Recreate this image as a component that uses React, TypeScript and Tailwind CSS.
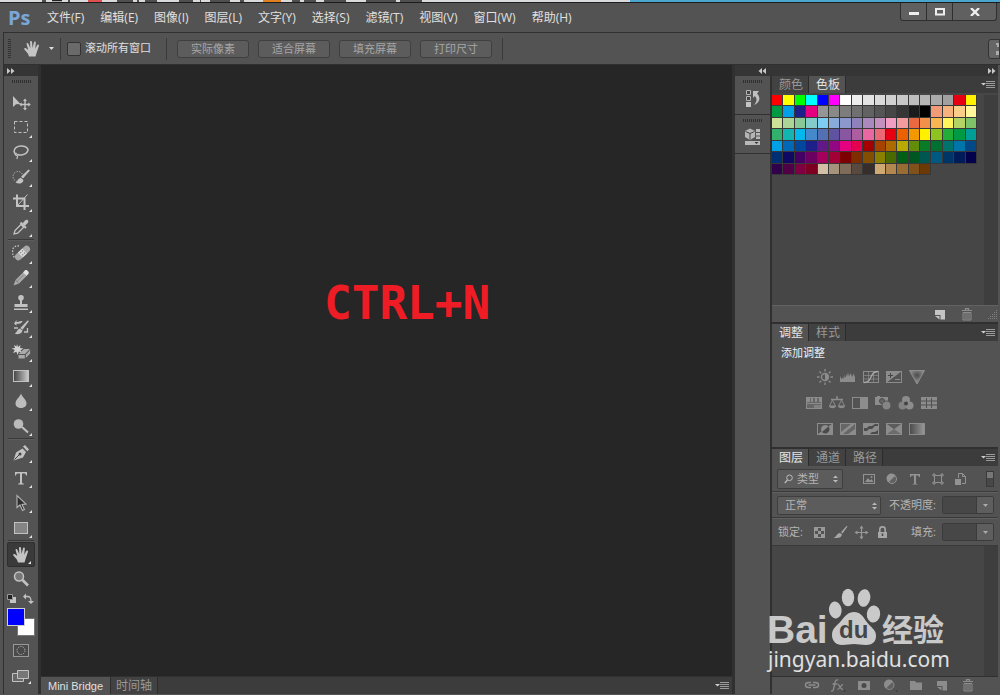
import type { ReactNode } from 'react';

const MENUS: [string, string][] = [
  ['文件', 'F'],
  ['编辑', 'E'],
  ['图像', 'I'],
  ['图层', 'L'],
  ['文字', 'Y'],
  ['选择', 'S'],
  ['滤镜', 'T'],
  ['视图', 'V'],
  ['窗口', 'W'],
  ['帮助', 'H'],
];

const VIEW_BUTTONS = ['实际像素', '适合屏幕', '填充屏幕', '打印尺寸'];

const SWATCHES = [
  '#ff0000', '#ffff00', '#00ff00', '#00ffff', '#0000ff', '#ff00ff', '#ffffff', '#ededed', '#e3e3e3', '#dadada', '#d0d0d0', '#c8c8c8', '#bebebe', '#b5b5b5', '#aaaaaa', '#a0a0a0', '#e60012', '#fff100',
  '#009944', '#00a0e9', '#1d2088', '#e4007f', '#959595', '#898989', '#7d7d7d', '#707070', '#626262', '#555555', '#464646', '#363636', '#1c1c1c', '#000000', '#f29b76', '#f6b37f', '#facd89', '#fff799',
  '#cce198', '#acd598', '#89c997', '#84ccc9', '#7ecef4', '#88abda', '#8c97cb', '#8f82bc', '#aa89bd', '#c490bf', '#f19ec2', '#f29c9f', '#eb6941', '#f19149', '#f8b551', '#fff45c', '#b3d465', '#80c269',
  '#32b16c', '#13b5b1', '#00b7ee', '#448aca', '#556fb5', '#5f52a0', '#8957a1', '#ae5da1', '#ea68a2', '#eb6877', '#e60012', '#eb6100', '#f39800', '#fff100', '#8fc31f', '#22ac38', '#009944', '#009e96',
  '#00a0e9', '#0068b7', '#00479d', '#1d2088', '#601986', '#920783', '#e4007f', '#e5004f', '#a40000', '#a84200', '#ac6a00', '#b7aa00', '#638c0b', '#097c25', '#007130', '#00736d', '#0075a9', '#004986',
  '#002e73', '#100964', '#440062', '#6a005f', '#a4005b', '#a30037', '#7d0000', '#7f2d00', '#834e00', '#8a8000', '#486a00', '#005e15', '#005621', '#005752', '#005982', '#003567', '#001c58', '#03004c',
  '#31004a', '#500047', '#7e0043', '#7d0022', '#d1c0a5', '#a6937c', '#7e6b5a', '#59493f', '#362e2b', '#cfa972', '#b28850', '#996c34', '#81511c', '#6a3906',
];

function Svg({ w, h, children }: { w: number; h: number; children: ReactNode }) {
  return (
    <svg width={w} height={h} viewBox={`0 0 ${w} ${h}`} fill="none" aria-hidden="true" className="block shrink-0">
      {children}
    </svg>
  );
}

const HAND_PATH =
  'M6 16.5 5 13.8 1.4 9.6c-.9-1.2.5-2.3 1.6-1.3L5.3 10 3.6 4.3c-.3-1.3 1.3-1.7 1.8-.5L7.3 8 7 2.1C7 .7 8.9.7 9 2.1L9.6 8l1.3-5.6c.4-1.3 2.1-.9 1.9.5L12.2 8.7l2-3.6c.7-1.1 2.2-.4 1.7.9l-2.4 7.2-1 3.3z';

const C = '#c2c2c2';

function MoveIcon() {
  return (
    <Svg w={20} h={20}>
      <path d="M2 4v11l3-2.700 4.500-.3z" fill={C} />
      <path d="M14 8v9M9.500 12.500h9" stroke={C} strokeWidth="1.400" />
      <path d="m14 6.500-2 2.500h4zM14 18.500l-2-2.500h4zM8.200 12.500l2.500-2v4zM19.800 12.500l-2.500-2v4z" fill={C} />
    </Svg>
  );
}
function MarqueeIcon() {
  return (
    <Svg w={20} h={20}>
      <rect x="3.500" y="4.500" width="13" height="11" stroke={C} strokeDasharray="3 2" />
    </Svg>
  );
}
function LassoIcon() {
  return (
    <Svg w={20} h={20}>
      <path d="M5.500 12.500C1 10 3.500 4.500 9.500 4s9 3 6.500 6.200c-2 2.500-6.500 3.500-10 2.300" stroke={C} strokeWidth="1.500" />
      <path d="M5.800 11.500c-2-.6-2.300 1.800-.3 1.800 1.600.2.900 2.600.2 3.700" stroke={C} strokeWidth="1.200" />
    </Svg>
  );
}
function QuickSelectIcon() {
  return (
    <Svg w={20} h={20}>
      <circle cx="7" cy="9.500" r="5" stroke={C} strokeDasharray="1.200 1.500" />
      <path d="M19 3.500 12 11.500l-2-1.700L17.500 2.500zM4.500 15.500c2-.3 2-4 5.200-4.800l2.800 2.500c-.6 3.800-5.500 4.100-8 2.300z" fill={C} />
    </Svg>
  );
}
function CropIcon() {
  return (
    <Svg w={20} h={20}>
      <path d="M6 2.500V14h12M2 6.500h11.500V18" stroke={C} strokeWidth="2" />
      <path d="m6.500 13.500 10-11" stroke={C} strokeWidth="1" />
    </Svg>
  );
}
function EyedropperIcon() {
  return (
    <Svg w={20} h={20}>
      <path d="m3 17 1-3.500 6-6 2.700 2.700-6 6z" stroke={C} strokeWidth="1.300" />
      <path d="m9.500 5.500 5.500 5.500" stroke={C} strokeWidth="2" />
      <path d="m11.500 6.500 2.500-3c2-2 4.500.5 2.700 2.500l-2.700 2.700z" fill={C} />
    </Svg>
  );
}
function HealIcon() {
  return (
    <Svg w={20} h={20}>
      <path d="M8 3C3.500 2.500 1.500 5 1.600 9c0 3 1 5 2.800 6.500" stroke={C} strokeDasharray="1.500 1.400" strokeWidth="1.300" />
      <g transform="rotate(-43 11.500 10)">
        <rect x="2.500" y="6.500" width="18" height="7" rx="3.500" fill="#a9a9a9" />
        <rect x="8.500" y="6.500" width="6" height="7" fill="#d6d6d6" />
        <path d="M10 8.500h1M12.500 8.500h1M10 11.500h1M12.500 11.500h1" stroke="#666" />
      </g>
    </Svg>
  );
}
function PencilIcon() {
  return (
    <Svg w={20} h={20}>
      <path d="m2.500 17.500 2-5.500 7.500-7.500 3.500 3.500L8 15.500z" fill="#aaa" />
      <path d="m12 4.500 1.800-1.900c1.800-1.800 5.200 1.700 3.500 3.500L15.500 8z" fill="#e2e2e2" />
      <path d="m4.500 12 3.500 3.500M5.500 14l7-7" stroke="#777" strokeWidth=".8" />
    </Svg>
  );
}
function StampIcon() {
  return (
    <Svg w={20} h={20}>
      <circle cx="10" cy="4.800" r="2.800" fill={C} />
      <path d="M9 6h2v5h5.500v3h-13v-3H9zM3 15.500h14V17H3z" fill={C} />
    </Svg>
  );
}
function HistoryBrushIcon() {
  return (
    <Svg w={20} h={20}>
      <path d="M18 4 11.500 12.700 9.400 11 16.500 3.500zM3.500 16.500c2.500-.3 2.200-4.100 5.500-4.900l2.500 2c-.5 3.600-5 4.300-8 2.900z" fill={C} />
      <path d="M3 6.500 5.500 3v2c3 .3 3.500-1.500 6-.7-1 2.400-3.600 2.700-6 2.400v2z" fill={C} />
      <path d="M3 11h4M13 15h3.500v-4" stroke={C} strokeWidth="1.300" />
    </Svg>
  );
}
function EraserIcon() {
  return (
    <Svg w={20} h={20}>
      <path d="m6 2 1 3 2.500-2L9 6l3.500.5-3 1.700 1.500 2.800-3-1.500L6.500 13l-1-3.300L2 11l1.800-3L.5 6.500 4 6 3 3l2.500 1.500z" fill="#d2d2d2" />
      <path d="m7.500 12 5.500-5h6l-5 5zM7.500 13h6.300v3.500H7.500zM14.800 12.700 19.200 8v3.500l-4.400 4.500z" fill="#a8a8a8" />
    </Svg>
  );
}
function GradientIcon() {
  return (
    <Svg w={20} h={20}>
      <defs>
        <linearGradient id="tool-gradient">
          <stop stopColor="#444" />
          <stop offset="1" stopColor="#ccc" />
        </linearGradient>
      </defs>
      <rect x="2.500" y="4.500" width="15" height="11" fill="url(#tool-gradient)" stroke={C} />
    </Svg>
  );
}
function DropIcon() {
  return (
    <Svg w={20} h={20}>
      <path d="M10 2.500c1 3.500 5.500 6 5.500 10 0 6-11 6-11 0 0-4 4.500-6.500 5.500-10z" fill="#bdbdbd" />
    </Svg>
  );
}
function DodgeIcon() {
  return (
    <Svg w={20} h={20}>
      <circle cx="7.500" cy="8" r="4.800" fill="#bbb" />
      <path d="m11 11 6 5.500" stroke={C} strokeWidth="2" />
    </Svg>
  );
}
function PenIcon() {
  return (
    <Svg w={20} h={20}>
      <path d="M2.500 17.500 5 9.500l6.500-4L15 9l-3 5.500z" fill={C} />
      <path d="m12 3.500 2-1.500 4 4.500-1.700 1.700z" fill={C} />
      <path d="m3.500 16.500 5-5" stroke="#444" />
      <circle cx="9" cy="11" r="1.500" fill="#444" />
    </Svg>
  );
}
function TypeIcon() {
  return (
    <Svg w={20} h={20}>
      <path d="M4 4h12v3.500h-1c-.2-1.500-.7-2-2-2h-2v9c0 .8.500 1 1.800 1v1H7.200v-1c1.300 0 1.800-.2 1.800-1v-9H7c-1.300 0-1.800.5-2 2H4z" fill={C} />
    </Svg>
  );
}
function PathSelectIcon() {
  return (
    <Svg w={20} h={20}>
      <path d="M6 2.500v12l3-2.500 2.500 5.500 2-1-2.500-5 4-.5z" fill="#303030" stroke="#b5b5b5" strokeWidth="1.100" />
    </Svg>
  );
}
function RectIcon() {
  return (
    <Svg w={20} h={20}>
      <rect x="3.500" y="4.500" width="13" height="11" fill="#858585" stroke={C} />
    </Svg>
  );
}
function HandIcon() {
  return (
    <Svg w={18} h={18}>
      <path d={HAND_PATH} fill="#c4c4c4" />
    </Svg>
  );
}
function ZoomIcon() {
  return (
    <Svg w={20} h={20}>
      <circle cx="8" cy="7.500" r="4.500" fill="#777" stroke={C} strokeWidth="1.500" />
      <path d="m11.500 11 5.500 5.500" stroke={C} strokeWidth="2.600" />
    </Svg>
  );
}

type Tool = { name: string; icon: () => ReactNode; plain?: boolean; active?: boolean };

const GROUP_A: Tool[] = [
  { name: '移动', icon: MoveIcon, plain: true },
  { name: '矩形选框', icon: MarqueeIcon },
  { name: '套索', icon: LassoIcon },
  { name: '快速选择', icon: QuickSelectIcon },
  { name: '裁剪', icon: CropIcon },
  { name: '吸管', icon: EyedropperIcon },
];
const GROUP_B: Tool[] = [
  { name: '修复画笔', icon: HealIcon },
  { name: '铅笔', icon: PencilIcon },
  { name: '仿制图章', icon: StampIcon },
  { name: '历史记录画笔', icon: HistoryBrushIcon },
  { name: '橡皮擦', icon: EraserIcon },
  { name: '渐变', icon: GradientIcon },
  { name: '模糊', icon: DropIcon },
  { name: '减淡', icon: DodgeIcon },
];
const GROUP_C: Tool[] = [
  { name: '钢笔', icon: PenIcon },
  { name: '横排文字', icon: TypeIcon },
  { name: '路径选择', icon: PathSelectIcon },
  { name: '矩形', icon: RectIcon },
];
const GROUP_D: Tool[] = [
  { name: '抓手', icon: HandIcon, active: true },
  { name: '缩放', icon: ZoomIcon, plain: true },
];

function ToolButton({ tool }: { tool: Tool }) {
  const Icon = tool.icon;
  return (
    <button
      aria-label={tool.name}
      className={
        tool.active
          ? 'relative mx-[3px] flex min-h-0 flex-1 items-center justify-center rounded-[2px] border border-[#2e2e2e] bg-[#3a3a3a]'
          : 'relative mx-[3px] flex min-h-0 flex-1 items-center justify-center'
      }
    >
      <Icon />
      {!tool.plain && (
        <span className="absolute right-[3px] bottom-0.5">
          <Svg w={3} h={3}>
            <path d="M3 0v3H0z" fill="#e4e4e4" />
          </Svg>
        </span>
      )}
    </button>
  );
}

function ToolDivider() {
  return <div className="mx-1 h-0.5 shrink-0 border-t border-[#3a3a3a] bg-[#5c5c5c]" />;
}

function Grip() {
  return (
    <div className="flex h-[3px] justify-center gap-px">
      {Array.from({ length: 10 }, (_, i) => (
        <span key={i} className="w-px bg-[#303030]" />
      ))}
    </div>
  );
}

function Chevrons({ left }: { left?: boolean }) {
  return (
    <Svg w={8} h={6}>
      <path d={left ? 'M4 0v6L.5 3zM8 0v6L4.500 3z' : 'M0 0v6l3.500-3zM4 0v6l3.500-3z'} fill="#c8c8c8" />
    </Svg>
  );
}

function PanelMenu() {
  return (
    <button aria-label="面板菜单" className="mr-[3px] ml-auto self-center">
      <Svg w={14} h={9}>
        <path d="M0 3h5L2.500 5.500z" fill="#ccc" />
        <path d="M5 1.500h9M5 3.500h9M5 5.500h9M5 7.500h9" stroke="#9a9a9a" />
      </Svg>
    </button>
  );
}

function Tabs({ tabs, active }: { tabs: string[]; active: number }) {
  return (
    <div className="flex h-[17px] shrink-0 bg-[#3c3c3c] text-xs leading-4">
      {tabs.map((t, i) => (
        <button
          key={t}
          className={
            i === active
              ? 'border-r border-[#2c2c2c] bg-[#535353] pr-[5px] pl-[7px] text-[#e6e6e6]'
              : 'border-r border-[#2c2c2c] bg-[#424242] pr-[5px] pl-[7px] text-[#999999]'
          }
        >
          {t}
        </button>
      ))}
      <PanelMenu />
    </div>
  );
}

const G = '#8c8c8c';

const ADJUST_ROWS: { name: string; art: ReactNode }[][] = [
  [
    { name: '亮度/对比度', art: <><circle cx="8" cy="8" r="3.500" stroke={G} strokeWidth="1.400" /><path d="M8 4.500a3.500 3.500 0 0 1 0 7z" fill={G} /><path d="M8 0v2.500M8 13.500V16M0 8h2.500M13.500 8H16M2.500 2.500l1.700 1.700M11.800 11.800l1.700 1.700M13.500 2.500l-1.700 1.700M4.200 11.800l-1.700 1.700" stroke={G} strokeWidth="1.400" /></> },
    { name: '色阶', art: <path d="M0 13V9l1-2v3l2-1V7l1 3 1-5v4l2-4V3l1 5 1-5v4l2-3v4l1-3v3l2-4v4l1-2v7z" fill={G} /> },
    { name: '曲线', art: <><rect x=".5" y="2.500" width="15" height="11" stroke={G} /><path d="M0 6.500h16M0 10h16M5.500 2v12M10.500 2v12" stroke={G} strokeWidth=".7" /><path d="M1 13.500c9 0 5-11 14-11" stroke="#aaa" strokeWidth="1.300" /></> },
    { name: '曝光度', art: <><path d="M0 2h16L0 14z" fill={G} /><rect x=".5" y="2.500" width="15" height="11" stroke={G} /><path d="M4.500 4v5M2 6.500h5" stroke="#444" /><path d="M9 10.500h5" stroke={G} /></> },
    { name: '自然饱和度', art: <><defs><radialGradient id="vibrance" cx=".5" cy=".35" r=".5"><stop stopColor="#4c4c4c" /><stop offset="1" stopColor="#8c8c8c" /></radialGradient></defs><path d="M.5 1.500h15L8 15z" fill="url(#vibrance)" stroke={G} /></> },
  ],
  [
    { name: '色相/饱和度', art: <><rect x=".5" y="2.500" width="15" height="11" fill="#666" stroke={G} /><path d="M1 3h3v4H1zM5 3h2v4H5zM9 3h2v4H9zM13 3h2v4h-2zM0 8h16v1H0z" fill={G} /><path d="M8 10h7v3H8z" fill="#808080" /></> },
    { name: '色彩平衡', art: <><path d="M8 1v4M2 4.500h12M8 2.500v2" stroke={G} strokeWidth="1.500" /><path d="m3.500 5-3 6h6l-3-6zM12.500 5l-3 6h6l-3-6z" stroke={G} /><path d="M0 11h7c-.5 3-6.500 3-7 0zM9 11h7c-.5 3-6.500 3-7 0z" fill={G} /></> },
    { name: '黑白', art: <><rect x=".5" y="2.500" width="15" height="11" stroke={G} /><path d="M8 3h7v10H8z" fill={G} /></> },
    { name: '照片滤镜', art: <><path d="M0 2h2V1h3v1h8v8H0z" fill={G} /><circle cx="7" cy="6" r="2.500" fill="#666" stroke="#4c4c4c" /><circle cx="11.500" cy="10.500" r="4.500" fill="#858585" stroke="#535353" /></> },
    { name: '通道混合器', art: <><circle cx="8" cy="5" r="4" fill={G} /><circle cx="4.500" cy="10.500" r="4" fill="#828282" /><circle cx="11.500" cy="10.500" r="4" fill={G} /><circle cx="8" cy="8.500" r="2" fill="#444" /></> },
    { name: '颜色查找', art: <><rect x=".5" y="2.500" width="15" height="11" fill={G} stroke={G} /><path d="M0 6h16M0 10h16M5.500 3v10M10.500 3v10" stroke="#505050" /></> },
  ],
  [
    { name: '反相', art: <><rect x=".5" y="2.500" width="15" height="11" stroke={G} /><path d="M15 3v10H1z" fill={G} /><path d="M11.500 5.500A4.200 4.200 0 1 0 5 11z" fill={G} /><path d="M11.500 5.500A4.200 4.200 0 0 1 5 11z" fill="#4a4a4a" /></> },
    { name: '色调分离', art: <><rect x=".5" y="2.500" width="15" height="11" fill="#666" stroke={G} /><path d="m1 11 10-8h4L3 13H1zM8 13l7-5v5z" fill={G} /></> },
    { name: '阈值', art: <><rect x=".5" y="2.500" width="15" height="11" fill={G} stroke={G} /><path d="M1 7h3l2-2h3l3-2h3v2h-3L9 8H6l-2 2H1zM7 13l2-2h3l3-2v4z" fill="#4c4c4c" /></> },
    { name: '可选颜色', art: <><rect x=".5" y="2.500" width="15" height="11" fill="#6c6c6c" stroke={G} /><path d="m1 3 7 5 7-5v10L8 8l-7 5z" fill={G} /><path d="M1 3h14L8 8z" fill="#5c5c5c" /></> },
    { name: '渐变映射', art: <><defs><linearGradient id="map-gradient"><stop stopColor="#4a4a4a" /><stop offset="1" stopColor="#999" /></linearGradient></defs><rect x=".5" y="2.500" width="15" height="11" fill="url(#map-gradient)" stroke={G} /></> },
  ],
];

const FILTERS: { name: string; art: ReactNode }[] = [
  { name: '像素图层', art: <><rect x="1.500" y="2.500" width="11" height="9" stroke="#939393" /><path d="m3 10 3-4 2 2.500L9.500 7l2 3z" fill="#939393" /><circle cx="9.500" cy="5" r="1" fill="#939393" /></> },
  { name: '调整图层', art: <><circle cx="7" cy="7" r="4.500" fill="#606060" stroke="#939393" /><path d="M10.500 3.500A5 5 0 1 0 3.500 10.500z" fill="#939393" /></> },
  { name: '文字图层', art: <path d="M2 2h10v3h-1c-.2-1.200-.5-1.500-1.500-1.500H8V11c0 .8.400 1 1.500 1v.5h-5V12C5.600 12 6 11.800 6 11V3.500H4.500C3.500 3.500 3.200 3.800 3 5H2z" fill="#939393" /> },
  { name: '形状图层', art: <><rect x="3.500" y="3.500" width="7" height="7" stroke="#939393" /><path d="M2 2h2v2H2zM10 2h2v2h-2zM2 10h2v2H2zM10 10h2v2h-2z" fill="#535353" stroke="#939393" /></> },
  { name: '智能对象', art: <><path d="M4.500 6V1.500h4l3 3v7H8" stroke="#939393" /><path d="M8.500 1.500v3h3" stroke="#939393" /><path d="M1 7h6v6H1z" fill="#939393" /></> },
];

const LOCKS: { name: string; art: ReactNode }[] = [
  { name: '锁定透明像素', art: <><rect x="2.500" y="2.500" width="10" height="10" stroke="#999" /><path d="M3 3h3v3H3zM9 3h3v3H9zM6 6h3v3H6zM3 9h3v3H3zM9 9h3v3H9z" fill="#999" /></> },
  { name: '锁定图像像素', art: <path d="M14.500 1.500 9.500 8.500 8 7.300 13.500 1zM.5 12.500c3 0 3-4.200 6.500-4.500l2 1.600c-.5 3.700-5 4-8.500 2.900z" fill="#a6a6a6" /> },
  { name: '锁定位置', art: <><path d="M7.500 2v11M2 7.500h11" stroke="#999" strokeWidth="1.200" /><path d="m7.500.5-2 3h4zM7.500 14.500l-2-3h4zM.5 7.500l3-2v4zM14.500 7.500l-3-2v4z" fill="#999" /></> },
  { name: '锁定全部', art: <><path d="M4.800 7V4.500c0-3.500 5.400-3.500 5.400 0V7" stroke="#a6a6a6" strokeWidth="1.600" /><path d="M3 7h9v6H3z" fill="#a6a6a6" /><path d="M7.500 8.500v2.500" stroke="#444" strokeWidth="1.500" /></> },
];

const LAYER_ACTIONS: { name: string; art: ReactNode }[] = [
  { name: '链接图层', art: <><path d="M7 4.500H4.500c-4 0-4 5 0 5H7M9 4.500h2.500c4 0 4 5 0 5H9" stroke={G} strokeWidth="1.500" /><path d="M4.500 7h7" stroke={G} strokeWidth="1.500" /></> },
  { name: '图层样式', art: <><path d="M1 13c2 .5 2.300-.5 2.800-3L5 4.500C5.500 2.300 6.500 1.600 8.200 2M2.500 6h5M8 6.500c2 0 2 5.500 5 5M13 6.500c-2 0-3.500 5-5.500 5" stroke={G} strokeWidth="1.300" /><path d="M13.500 12.500H16L14.700 14z" fill="#333" /></> },
  { name: '图层蒙版', art: <><path d="M2 3h12v9H2z" fill={G} /><circle cx="8" cy="7.500" r="2.500" fill="#4a4a4a" /></> },
  { name: '新建调整图层', art: <><circle cx="7.500" cy="7" r="4.500" fill="#606060" stroke={G} /><path d="M11 3.500A5 5 0 1 0 4 10.500z" fill={G} /><path d="M13.500 12.500H16L14.700 14z" fill="#333" /></> },
  { name: '新建组', art: <path d="M2 3h5l1 1.500h6V12H2z" fill={G} /> },
  { name: '新建图层', art: <NewPageArt fill={G} /> },
  { name: '删除图层', art: <TrashArt /> },
];

function NewPageArt({ fill }: { fill: string }) {
  return (
    <>
      <path d="M3 3h10v9.500H8.500V8H3z" fill={fill} />
      <path d="M3 9h4.500v3.500z" fill={fill} />
    </>
  );
}

function TrashArt() {
  return (
    <>
      <path d="M3 3.500h10M6.500 3V1.700h3V3" stroke={G} strokeWidth="1.200" />
      <path d="M4 5.500h8v7.500H4z" stroke={G} />
      <path d="M6 6v6.500M8 6v6.500M10 6v6.500" stroke={G} />
    </>
  );
}

function UpDown() {
  return (
    <Svg w={5} h={8}>
      <path d="M0 3h5L2.500.5zM0 5h5L2.500 7.500z" fill="#bbb" />
    </Svg>
  );
}

function PercentField({ id }: { id: string }) {
  return (
    <div className="flex h-[18px] w-[52px] rounded-[2px] border border-[#3b3b3b]">
      <input id={id} className="w-0 flex-1 bg-[#474747]" />
      <button aria-label="展开滑块" className="flex w-[17px] items-center justify-center border-l border-[#3b3b3b] bg-[#5e5e5e]">
        <Svg w={5} h={3}>
          <path d="M0 0h5L2.500 3z" fill="#aaa" />
        </Svg>
      </button>
    </div>
  );
}

function Toolbox() {
  return (
    <aside className="flex w-[34px] shrink-0 flex-col">
      <div className="flex h-[11px] shrink-0 items-center bg-[#353535] pl-[3px]">
        <Chevrons />
      </div>
      <div className="flex min-h-0 flex-1 flex-col bg-[#535353] pt-1">
        <Grip />
        <div className="mt-[7px] flex h-[149px] shrink-0 flex-col">
          {GROUP_A.map((t) => <ToolButton key={t.name} tool={t} />)}
        </div>
        <ToolDivider />
        <div className="flex h-[197px] shrink-0 flex-col">
          {GROUP_B.map((t) => <ToolButton key={t.name} tool={t} />)}
        </div>
        <ToolDivider />
        <div className="flex h-[100px] shrink-0 flex-col">
          {GROUP_C.map((t) => <ToolButton key={t.name} tool={t} />)}
        </div>
        <ToolDivider />
        <div className="flex h-[48px] shrink-0 flex-col">
          {GROUP_D.map((t) => <ToolButton key={t.name} tool={t} />)}
        </div>
        <div className="mt-[3px] flex justify-between pr-1 pl-0.5">
          <button aria-label="默认颜色">
            <Svg w={11} h={11}>
              <path d="M4 4h6v6H4z" fill="#c4c4c4" />
              <path d="M1.500 1.500h5v5h-5z" fill="#222" stroke="#999" />
            </Svg>
          </button>
          <button aria-label="切换颜色">
            <Svg w={11} h={11}>
              <path d="M2 3.500h2.500c2.500 0 3.500 1 3.500 5" stroke={C} strokeWidth="1.300" />
              <path d="M0 3.500 3 .5v6zM8 11 5 8h6z" fill={C} />
            </Svg>
          </button>
        </div>
        <div className="mt-1 ml-[3px] grid h-[28px] w-[28px] shrink-0 grid-cols-1">
          <button aria-label="背景色" className="col-start-1 row-start-1 h-[18px] w-[18px] self-end justify-self-end border border-[#777777] bg-white" />
          <button aria-label="前景色" className="col-start-1 row-start-1 h-[18px] w-[18px] border border-[#cfcfcf] bg-[#0000ff]" />
        </div>
        <button aria-label="快速蒙版" className="mt-2 flex justify-center">
          <Svg w={16} h={13}>
            <rect x=".5" y=".5" width="15" height="12" fill="#4a4a4a" stroke="#999" />
            <circle cx="8" cy="6.500" r="4" stroke="#aaa" strokeDasharray="1.500 1" />
          </Svg>
        </button>
        <button aria-label="屏幕模式" className="mt-3 flex justify-center">
          <Svg w={20} h={15}>
            <path d="M1.500 4.500h11v8h-11z" fill="#666" stroke={C} />
            <path d="M6.500 1.500h11v8h-11z" fill="#777" stroke={C} />
            <path d="M20 12v3h-3z" fill="#e4e4e4" />
          </Svg>
        </button>
      </div>
    </aside>
  );
}

function SwatchPanel() {
  return (
    <section className="flex flex-col">
      <Tabs tabs={['颜色', '色板']} active={1} />
      <div className="flex h-[212px] bg-[#464646] pt-0.5">
        <div className="grid h-[80px] w-[205px] grid-cols-[repeat(18,minmax(0,1fr))] grid-rows-7">
          {SWATCHES.map((c, i) => (
            <span key={i} className="border-r border-b border-[#383838]" style={{ backgroundColor: c }} />
          ))}
        </div>
        <div className="ml-auto w-3.5 bg-[#3e3e3e]" />
      </div>
      <div className="flex h-[17px] items-center justify-end border-t border-[#626262] bg-[#535353]">
        <button aria-label="新建色板">
          <Svg w={16} h={15}><NewPageArt fill="#c4c4c4" /></Svg>
        </button>
        <button aria-label="删除色板" className="mr-3 ml-[11px]">
          <Svg w={16} h={15}><TrashArt /></Svg>
        </button>
        <Svg w={11} h={11}>
          <path d="M9.500 1v10M7.500 3v8M5.500 5v6M3.500 7v4M1.500 9v2" stroke="#808080" strokeDasharray="1 1" />
        </Svg>
      </div>
    </section>
  );
}

function AdjustPanel() {
  return (
    <section className="flex flex-col">
      <Tabs tabs={['调整', '样式']} active={0} />
      <div className="flex h-[106px] flex-col bg-[#535353] pt-[3px]">
        <h2 className="pl-[9px] text-[11px] leading-[18px] text-[#f0f0f0]">添加调整</h2>
        <div className="flex flex-col gap-2.5 pt-[7px]">
          {ADJUST_ROWS.map((row, i) => (
            <div key={i} className={row.length === 6 ? 'flex pl-[30px]' : 'flex pl-[41px]'}>
              {row.map((a) => (
                <button key={a.name} aria-label={a.name} className="flex w-[23px] justify-center">
                  <Svg w={16} h={16}>{a.art}</Svg>
                </button>
              ))}
            </div>
          ))}
        </div>
      </div>
    </section>
  );
}

function LayersPanel() {
  return (
    <section className="flex min-h-0 flex-1 flex-col text-[11px] text-[#b4b4b4]">
      <Tabs tabs={['图层', '通道', '路径']} active={0} />
      <div className="flex h-[26px] shrink-0 items-center border-b border-[#3a3a3a] bg-[#535353] pr-1 pl-[5px]">
        <div className="relative h-5 w-[66px] rounded-[2px] border border-[#3e3e3e] bg-[#5c5c5c]">
          <span className="absolute top-1 left-1.5">
            <Svg w={9} h={10}>
              <circle cx="5.500" cy="3.800" r="2.800" stroke="#bbb" />
              <path d="M3.500 6 .8 9" stroke="#bbb" strokeWidth="1.300" />
            </Svg>
          </span>
          <select aria-label="图层筛选" className="h-full w-full appearance-none pl-[19px] leading-4">
            <option>类型</option>
          </select>
          <span className="pointer-events-none absolute top-[5px] right-1">
            <UpDown />
          </span>
        </div>
        <div className="ml-3.5 flex">
          {FILTERS.map((f) => (
            <button key={f.name} aria-label={f.name} className="flex w-[23px] justify-center">
              <Svg w={14} h={14}>{f.art}</Svg>
            </button>
          ))}
        </div>
        <button aria-label="筛选开关" className="ml-auto flex h-4 w-2 flex-col border border-[#3a3a3a] bg-[#484848]">
          <span className="block h-1.5 w-full bg-[#777777]" />
        </button>
      </div>
      <div className="flex h-[26px] shrink-0 items-center border-t border-b border-t-[#606060] border-b-[#3a3a3a] bg-[#535353] pr-1 pl-[5px]">
        <div className="relative h-[19px] w-[104px] rounded-[2px] border border-[#3e3e3e] bg-[#5c5c5c]">
          <select aria-label="混合模式" className="h-full w-full appearance-none pl-[7px] leading-4">
            <option>正常</option>
          </select>
          <span className="pointer-events-none absolute top-[5px] right-[3px]">
            <UpDown />
          </span>
        </div>
        <label htmlFor="opacity" className="ml-auto pr-1.5">不透明度:</label>
        <PercentField id="opacity" />
      </div>
      <div className="flex h-[28px] shrink-0 items-center border-t border-b border-t-[#606060] border-b-[#3a3a3a] bg-[#535353] pr-1 pl-1.5">
        <span>锁定:</span>
        <div className="ml-1.5 flex">
          {LOCKS.map((l) => (
            <button key={l.name} aria-label={l.name} className="flex w-[21px] justify-center">
              <Svg w={15} h={15}>{l.art}</Svg>
            </button>
          ))}
        </div>
        <label htmlFor="fill" className="ml-auto pr-1.5">填充:</label>
        <PercentField id="fill" />
      </div>
      <div className="flex min-h-0 flex-1 justify-end bg-[#464646]">
        <div className="w-3.5 bg-[#3e3e3e]" />
      </div>
      <div className="flex h-[18px] shrink-0 items-center justify-end gap-2.5 border-t border-[#303030] bg-[#535353] pr-[22px]">
        {LAYER_ACTIONS.map((a) => (
          <button key={a.name} aria-label={a.name}>
            <Svg w={16} h={15}>{a.art}</Svg>
          </button>
        ))}
      </div>
    </section>
  );
}

function Watermark() {
  return (
    <div className="pointer-events-none absolute right-[50px] bottom-[21px]">
      <svg width="184" height="96" viewBox="0 0 184 96" fill="#c9c9c9" role="img" aria-label="Baidu 经验">
        <ellipse cx="69.300" cy="32" rx="6.300" ry="8.500" transform="rotate(-8 69.300 32)" />
        <ellipse cx="82" cy="19.500" rx="6.200" ry="8.800" />
        <ellipse cx="98" cy="20" rx="6.300" ry="8.800" transform="rotate(10 98 20)" />
        <ellipse cx="107.500" cy="36" rx="6.700" ry="8.500" transform="rotate(6 107.500 36)" />
        <path d="M88 34c6 0 9 4 12 9 4 6 10 8 10 15 0 6-4 9-10 9-5 0-8-1-12-1s-7 1-12 1c-6 0-10-4-10-10 0-7 5-9 9-14 4-5 7-9 13-9z" />
        <text x="1" y="65" fontFamily="Liberation Sans, sans-serif" fontWeight="700" fontSize="39">Bai</text>
        <text x="73" y="60" fontFamily="Liberation Sans, sans-serif" fontWeight="700" fontSize="24" fill="#464646">du</text>
        <text x="116" y="63" fontFamily="Noto Sans CJK SC, sans-serif" fontWeight="700" fontSize="31">经验</text>
        <text x="2" y="89" fontFamily="Noto Sans, sans-serif" fontSize="21" fill="#e0e0e0">jingyan.baidu.com</text>
      </svg>
    </div>
  );
}

export default function App() {
  return (
    <div className="relative flex h-screen min-h-[690px] flex-col overflow-hidden bg-[#535353] font-['Open_Sans','Noto_Sans_CJK_SC',sans-serif] text-xs text-[#e0e0e0]">
      <div className="flex h-[3px] shrink-0 border-b border-[#1c1c1c] bg-[#d9dadb]">
        <div className="flex w-[63%] pl-[42px]">
          <Svg w={400} h={2}>
            <path d="M0 1h4M10 .5h10M26 1h2M75 1h16M95 1h2M103 1h12M137 1h14M158 1h1M168 1h20M198 1h4M250 1h8M262 1h12M282 1h22M324 1h30M358 1h22" stroke="#222" strokeWidth="1.500" />
            <path d="M46 1h14" stroke="#e05050" strokeWidth="2" />
            <path d="M221 1h18" stroke="#e08020" strokeWidth="2" />
          </Svg>
        </div>
        <div className="flex-1 bg-[#4ba6cf]" />
      </div>

      <header className="flex h-[29px] shrink-0 items-center">
        <span className="w-[47px] pl-2 font-['Open_Sans',sans-serif] text-xl leading-5 font-bold text-[#7aa6d8]">Ps</span>
        <nav className="flex gap-4">
          {MENUS.map(([label, key]) => (
            <button key={key} className="whitespace-nowrap">{label}({key})</button>
          ))}
        </nav>
        <div className="mr-[3px] ml-auto flex h-[18px] self-start rounded-b-[3px] border border-t-0 border-[#2f2f2f] bg-[#606060]">
          <button aria-label="最小化" className="flex w-[26px] items-center justify-center border-r border-[#2f2f2f]">
            <Svg w={10} h={10}><path d="M0 5h10v3H0z" fill="#eee" /></Svg>
          </button>
          <button aria-label="最大化" className="flex w-[26px] items-center justify-center border-r border-[#2f2f2f]">
            <Svg w={10} h={8}><path d="M1 1h8v5.500H1z" stroke="#eee" strokeWidth="2" /></Svg>
          </button>
          <button aria-label="关闭" className="flex w-[43px] items-center justify-center">
            <Svg w={10} h={8}><path d="m1 0 8 8M9 0 1 8" stroke="#eee" strokeWidth="2.400" /></Svg>
          </button>
        </div>
      </header>

      <div className="ml-[3px] flex h-[33px] shrink-0 items-center border-t border-b border-l border-[#303030] pl-1 text-[11px]">
        <div className="flex h-[20px] w-[3px] flex-col justify-between">
          {Array.from({ length: 10 }, (_, i) => (
            <span key={i} className="h-px bg-[#333333]" />
          ))}
        </div>
        <button aria-label="抓手工具" className="ml-3 flex items-center gap-2">
          <HandIcon />
          <Svg w={5} h={3}><path d="M0 0h5L2.500 3z" fill="#ddd" /></Svg>
        </button>
        <div className="ml-1.5 h-[22px] w-px bg-[#3a3a3a]" />
        <input id="scroll-all" type="checkbox" className="ml-1.5 h-[14px] w-[14px] appearance-none rounded-[2px] border border-[#333333] bg-[#6a6a6a]" />
        <label htmlFor="scroll-all" className="ml-1 w-[81px] whitespace-nowrap">滚动所有窗口</label>
        <div className="h-[22px] w-px bg-[#3a3a3a]" />
        <div className="ml-2.5 flex gap-[9px]">
          {VIEW_BUTTONS.map((b) => (
            <button key={b} className="h-[18px] w-[72px] rounded-[3px] border border-[#3f3f3f] bg-[#5c5c5c] leading-4 whitespace-nowrap text-[#a6a6a6]">
              {b}
            </button>
          ))}
        </div>
        <div className="ml-2.5 h-[22px] w-px bg-[#3a3a3a]" />
        <button aria-label="工作区" className="ml-auto h-5 w-3 overflow-hidden rounded-l-[3px] border border-[#333333] bg-[#666666]">
          <Svg w={10} h={18}><path d="M7 4h3M8 6h2M7 12h3M7 14h3" stroke="#eee" /></Svg>
        </button>
      </div>

      <div className="mr-0.5 mb-px ml-[3px] flex min-h-0 flex-1 border-l border-[#303030] bg-[#303030]">
        <Toolbox />

        <main className="ml-[3px] flex min-w-0 flex-1 flex-col">
          <div className="flex min-h-0 flex-1 flex-col bg-[#262626]">
            <p className="pt-[211px] pr-0.5 pl-[283px] font-['DejaVu_Sans_Mono',monospace] text-[46px] leading-[54px] font-bold text-[#ee1c24]">CTRL+N</p>
          </div>
          <div className="flex h-[18px] shrink-0 border-t border-[#303030] bg-[#3c3c3c] leading-4">
            <button className="border-r border-[#2c2c2c] bg-[#535353] px-[7px] font-['Liberation_Sans',sans-serif] text-[11px] whitespace-nowrap">Mini Bridge</button>
            <button className="border-r border-[#2c2c2c] bg-[#424242] px-[5px] whitespace-nowrap text-[#999999]">时间轴</button>
            <PanelMenu />
          </div>
        </main>

        <aside className="ml-[3px] flex w-[263px] shrink-0 flex-col">
          <div className="flex h-[11px] shrink-0 items-center justify-between bg-[#353535] pr-0.5 pl-[23px]">
            <Chevrons left />
            <Chevrons />
          </div>
          <div className="flex min-h-0 flex-1">
            <div className="w-[35px] shrink-0 bg-[#535353]">
              <div className="h-[39px] border-b border-[#303030] pt-1">
                <Grip />
                <button aria-label="历史记录" className="mt-1.5 flex w-full justify-center">
                  <Svg w={18} h={18}>
                    <path d="M2.500 1.500h4v4h-4zM2.500 7.500h4v4h-4z" fill="#444" stroke="#b5b5b5" />
                    <path d="M2 13h5v5H2z" fill="#c4c4c4" />
                    <path d="M9 2h6l-2 2.500c4 4 3 9-3 11.500 3-3.500 3.500-6 .8-9L9 9z" fill="#c0c0c0" />
                  </Svg>
                </button>
              </div>
              <div className="h-[39px] border-b border-[#303030] pt-1">
                <Grip />
                <button aria-label="属性" className="mt-1.5 flex w-full justify-center">
                  <Svg w={18} h={18}>
                    <path d="M6 .5 11 3v6l-5 3-5-3V3z" fill="#b5b5b5" />
                    <path d="m1.500 3.500 4.500 2 4.500-2M6 5.500v6" stroke="#444" />
                    <path d="M12 1h4v3h-4zM12 5h4v2.500h-4zM12 8.500h4v2.500h-4zM1 13h15v4H1z" fill="#b8b8b8" />
                    <path d="M10.500 14h4l-2 2z" fill="#333" />
                  </Svg>
                </button>
              </div>
            </div>
            <div className="ml-0.5 flex min-w-0 flex-1 flex-col gap-0.5">
              <SwatchPanel />
              <AdjustPanel />
              <LayersPanel />
            </div>
          </div>
        </aside>
      </div>
      <Watermark />
    </div>
  );
}
